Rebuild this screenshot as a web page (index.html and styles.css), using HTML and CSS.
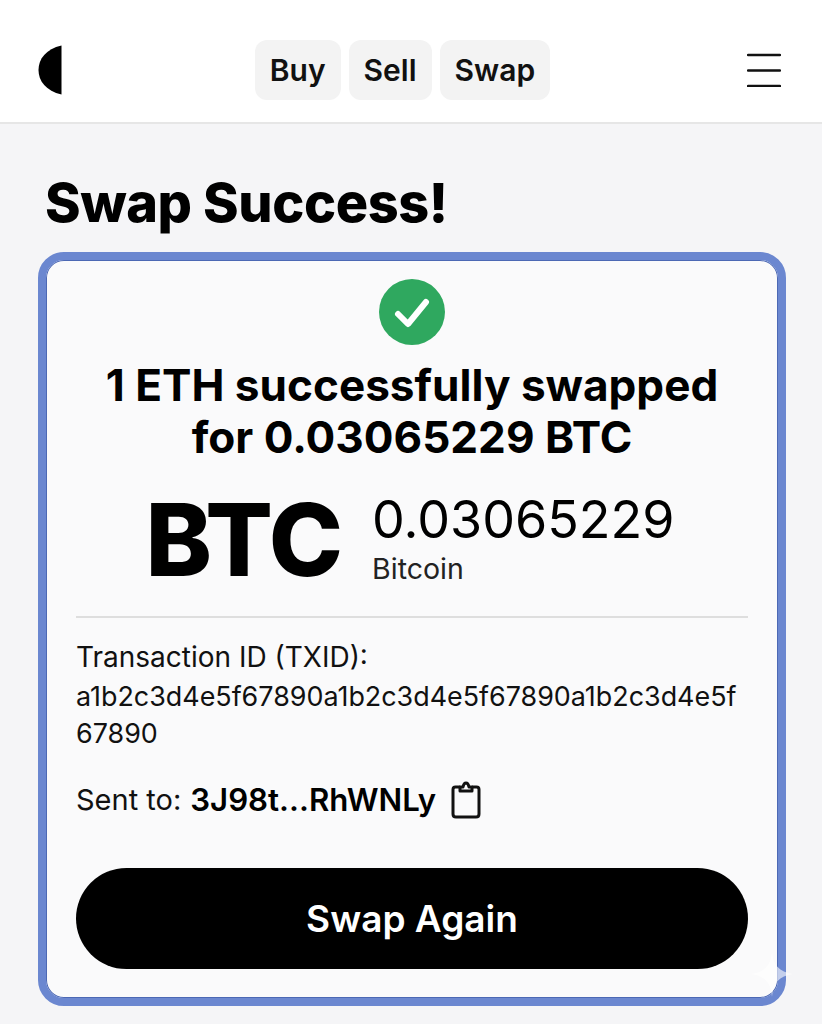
FILE: index.html
```html
<!DOCTYPE html>
<html lang="en">
<head>
    <meta charset="UTF-8">
    <meta name="viewport" content="width=device-width, initial-scale=1.0">
    <title>Swap Success</title>
    <link rel="stylesheet" href="styles.css">
</head>
<body>

<!-- Top bar -->
<header class="topbar">
    <svg class="logo" width="24" height="50" viewBox="0 0 24 50" aria-hidden="true">
        <path d="M23.500 0.500V49.500C8 46 0.500 36 0.500 25C0.500 14 8 4 23.500 0.500Z" fill="#000"/>
    </svg>
    <nav class="nav">
        <a class="nav-btn">Buy</a>
        <a class="nav-btn">Sell</a>
        <a class="nav-btn">Swap</a>
    </nav>
    <svg class="menu" width="34" height="34" viewBox="0 0 34 34" aria-hidden="true">
        <path d="M1 2H33M1 17.500H33M1 33H33" stroke="#111" stroke-width="2.500" stroke-linecap="round"/>
    </svg>
</header>

<main class="content">
    <h1 class="page-title">Swap Success!</h1>

    <section class="card">
        <svg class="check" width="66" height="66" viewBox="0 0 66 66" aria-hidden="true">
            <circle cx="33" cy="33" r="33" fill="#2fa85f"/>
            <path d="M19 35L29 45L47 23" fill="none" stroke="#fff" stroke-width="6" stroke-linecap="round" stroke-linejoin="round"/>
        </svg>
        <h2 class="headline">1 ETH successfully swapped<br>for 0.03065229 BTC</h2>

        <div class="amount">
            <div class="ticker">BTC</div>
            <div class="amount-detail">
                <div class="amount-value">0.03065229</div>
                <div class="amount-name">Bitcoin</div>
            </div>
        </div>

        <div class="details">
            <div class="txid-label">Transaction ID (TXID):</div>
            <div class="txid">a1b2c3d4e5f67890a1b2c3d4e5f67890a1b2c3d4e5f<br>67890</div>
            <div class="sent-row">
                <span>Sent to:</span>
                <strong class="address">3J98t...RhWNLy</strong>
                <svg class="clip" width="30" height="38" viewBox="0 0 30 38" aria-hidden="true">
                    <path d="M9 6H4.500C2.800 6 2 7 2 8.500V33C2 35 3 36 5 36H25C27 36 28 35 28 33V8.500C28 7 27.200 6 25.500 6H21" fill="none" stroke="#111" stroke-width="3"/>
                    <path d="M9 10V6H12C12.500 3.500 13.500 2 15 2C16.500 2 17.500 3.500 18 6H21V10Z" fill="none" stroke="#111" stroke-width="3" stroke-linejoin="round"/>
                </svg>
            </div>
        </div>

        <button class="swap-again">Swap Again</button>

        <!-- faint sparkle over the corner -->
        <svg class="sparkle" width="42" height="46" viewBox="0 0 42 46" aria-hidden="true">
            <path d="M21 0C22 14 28 21 42 23C28 25 22 32 21 46C20 32 14 25 0 23C14 21 20 14 21 0Z" fill="#fff" fill-opacity="0.6"/>
        </svg>
    </section>
</main>

</body>
</html>
```
FILE: styles.css
```css
* {
    box-sizing: border-box;
}

body {
    margin: 0;
    font-family: 'Inter', 'Liberation Sans', sans-serif;
    background-color: #f5f5f7;
    color: #000;
}

.topbar {
    height: 124px;
    padding: 18px 41px 0 38px;
    background-color: #fff;
    border-bottom: 2px solid #e6e6e6;
    display: flex;
    justify-content: space-between;
    align-items: center;
}

.logo {
    flex: none;
}

.nav {
    display: flex;
    gap: 8px;
    margin-right: 4px;
}

.nav-btn {
    height: 60px;
    padding: 0 15px;
    display: flex;
    align-items: center;
    background-color: #f3f3f3;
    border-radius: 12px;
    font-size: 30px;
    font-weight: 600;
    color: #111;
}

.content {
    padding: 49px 36px 0 38px;
}

.page-title {
    margin: 0 0 19px 7px;
    font-size: 54px;
    line-height: 60px;
    font-weight: 800;
    letter-spacing: -0.4px;
}

.card {
    position: relative;
    height: 754px;
    padding: 19px 30px 0;
    background-color: #fafafb;
    border: 8px solid #6b87d0;
    border-radius: 26px;
    box-shadow: inset 0 0 0 1px #4c68b4;
    display: flex;
    flex-direction: column;
    align-items: stretch;
}

.check {
    align-self: center;
    flex: none;
}

.headline {
    margin: 14px -20px 0;
    text-align: center;
    font-size: 44.100px;
    line-height: 52px;
    font-weight: 700;
}

.amount {
    margin-top: 23px;
    display: flex;
    justify-content: center;
    align-items: flex-start;
    gap: 30px;
    padding: 0 4px 24px 0;
    border-bottom: 2px solid #dedede;
}

.ticker {
    margin-top: 2px;
    font-size: 100px;
    line-height: 104px;
    font-weight: 800;
    letter-spacing: -1px;
}

.amount-detail {
    margin-top: 6px;
}

.amount-value {
    font-size: 52px;
    line-height: 56px;
}

.amount-name {
    margin-top: 3px;
    font-size: 28.500px;
    line-height: 36px;
    color: #222;
}

.details {
    margin-top: 20px;
    font-size: 28px;
    line-height: 38px;
    color: #111;
}

.txid {
    margin-top: 2px;
    font-size: 26.900px;
    line-height: 37px;
}

.sent-row {
    margin-top: 29px;
    display: flex;
    align-items: center;
    gap: 9px;
    font-size: 29px;
}

.address {
    font-size: 31.200px;
    font-weight: 600;
    color: #000;
}

.clip {
    margin-left: 6px;
}

.swap-again {
    margin-top: 49px;
    height: 101px;
    border: none;
    border-radius: 51px;
    background-color: #000;
    color: #fff;
    font-family: inherit;
    font-size: 37px;
    font-weight: 600;
}

.sparkle {
    position: absolute;
    right: -15px;
    bottom: 1px;
}
```
